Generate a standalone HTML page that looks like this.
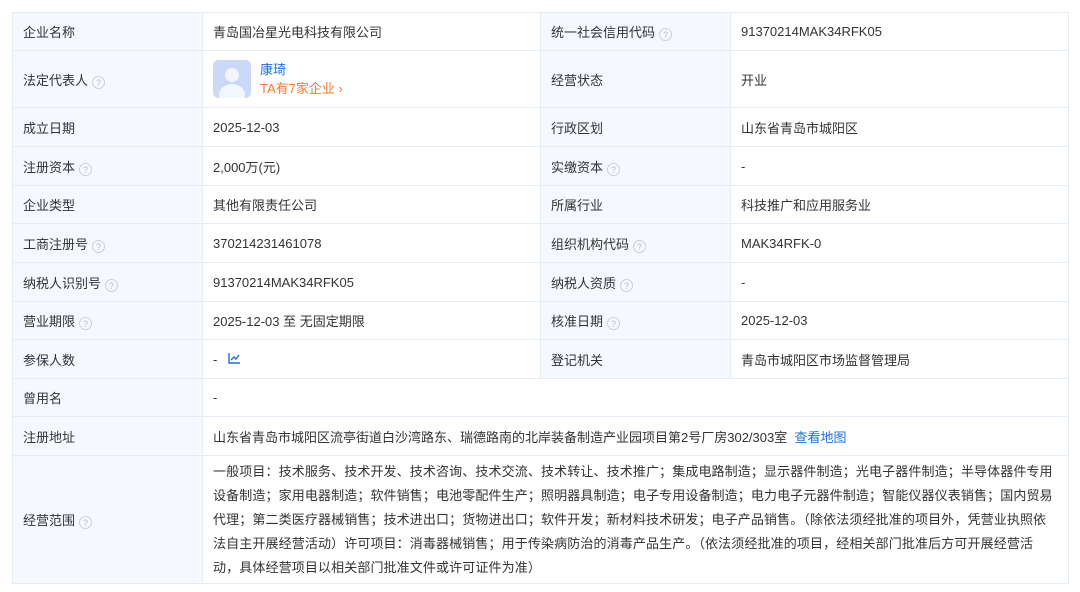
<!DOCTYPE html>
<html><head><meta charset="utf-8"><style>
body{margin:0;background:#fff;font-family:"Liberation Sans","Noto Sans CJK SC",sans-serif;font-size:13px;color:#333;}
table{position:absolute;left:12px;top:12px;width:1056px;border-collapse:collapse;table-layout:fixed;}
td{border:1px solid #e6ecf6;padding:0 10px;vertical-align:middle;}
td.l{background:#f5f8fe;color:#333;}
.q{display:inline-block;width:13px;height:13px;border:1px solid #cfcfcf;border-radius:50%;color:#bbb;font-size:9px;line-height:13px;text-align:center;margin-left:4px;vertical-align:-1px;box-sizing:border-box;}
a{color:#1f6fe5;text-decoration:none;}
</style></head><body>
<table>
<colgroup><col style="width:190px"><col style="width:338px"><col style="width:190px"><col style="width:338px"></colgroup>
<tr style="height:38px"><td class="l">企业名称</td><td>青岛国冶星光电科技有限公司</td><td class="l">统一社会信用代码<span class="q">?</span></td><td>91370214MAK34RFK05</td></tr>
<tr style="height:57px"><td class="l">法定代表人<span class="q">?</span></td><td><div style="display:flex;align-items:center"><div style="width:38px;height:38px;border-radius:5px;background:#c9d9f7;position:relative;overflow:hidden;margin-right:9px"><div style="position:absolute;left:12px;top:8px;width:14px;height:14px;border-radius:50%;background:#f2f6fe"></div><div style="position:absolute;left:6px;top:24px;width:26px;height:22px;border-radius:50%;background:#f2f6fe"></div></div><div><div style="color:#1f6fe5;line-height:19px">康琦</div><div style="color:#fa7a2e;line-height:19px">TA有7家企业 ›</div></div></div></td><td class="l">经营状态</td><td>开业</td></tr>
<tr style="height:39px"><td class="l">成立日期</td><td>2025-12-03</td><td class="l">行政区划</td><td>山东省青岛市城阳区</td></tr>
<tr style="height:39px"><td class="l">注册资本<span class="q">?</span></td><td>2,000万(元)</td><td class="l">实缴资本<span class="q">?</span></td><td>-</td></tr>
<tr style="height:38px"><td class="l">企业类型</td><td>其他有限责任公司</td><td class="l">所属行业</td><td>科技推广和应用服务业</td></tr>
<tr style="height:39px"><td class="l">工商注册号<span class="q">?</span></td><td>370214231461078</td><td class="l">组织机构代码<span class="q">?</span></td><td>MAK34RFK-0</td></tr>
<tr style="height:39px"><td class="l">纳税人识别号<span class="q">?</span></td><td>91370214MAK34RFK05</td><td class="l">纳税人资质<span class="q">?</span></td><td>-</td></tr>
<tr style="height:38px"><td class="l">营业期限<span class="q">?</span></td><td>2025-12-03 至 无固定期限</td><td class="l">核准日期<span class="q">?</span></td><td>2025-12-03</td></tr>
<tr style="height:39px"><td class="l">参保人数</td><td>- &nbsp;&nbsp;<svg width="13" height="12" viewBox="0 0 13 12" style="vertical-align:0"><path d="M1 1V11H12M3 8L6 5L8 7L11 3" fill="none" stroke="#1f6fe5" stroke-width="1.4"/></svg></td><td class="l">登记机关</td><td>青岛市城阳区市场监督管理局</td></tr>
<tr style="height:38px"><td class="l">曾用名</td><td colspan="3">-</td></tr>
<tr style="height:39px"><td class="l">注册地址</td><td colspan="3">山东省青岛市城阳区流亭街道白沙湾路东、瑞德路南的北岸装备制造产业园项目第2号厂房302/303室 &nbsp;<a>查看地图</a></td></tr>
<tr style="height:128px"><td class="l">经营范围<span class="q">?</span></td><td colspan="3" style="line-height:24px;letter-spacing:0.12px">一般项目：技术服务、技术开发、技术咨询、技术交流、技术转让、技术推广；集成电路制造；显示器件制造；光电子器件制造；半导体器件专用设备制造；家用电器制造；软件销售；电池零配件生产；照明器具制造；电子专用设备制造；电力电子元器件制造；智能仪器仪表销售；国内贸易代理；第二类医疗器械销售；技术进出口；货物进出口；软件开发；新材料技术研发；电子产品销售。（除依法须经批准的项目外，凭营业执照依法自主开展经营活动）许可项目：消毒器械销售；用于传染病防治的消毒产品生产。（依法须经批准的项目，经相关部门批准后方可开展经营活动，具体经营项目以相关部门批准文件或许可证件为准）</td></tr>
</table>
</body></html>
